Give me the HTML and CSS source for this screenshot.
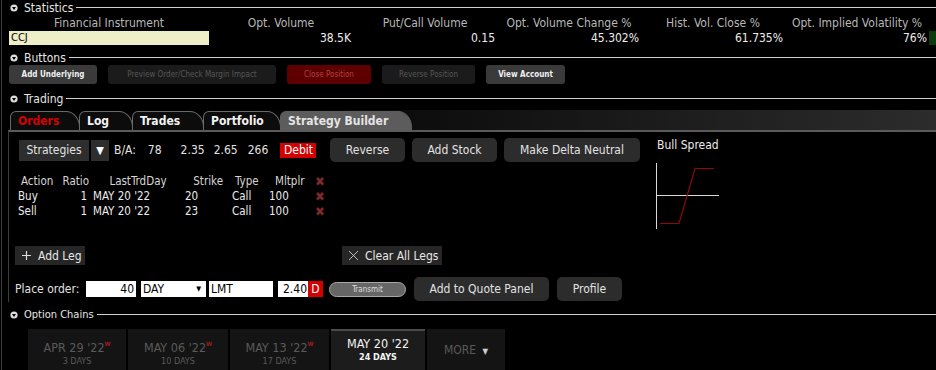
FILE: index.html
```html
<!DOCTYPE html>
<html lang="en">

<head>
	<meta charset="utf-8">
	<title>Option Trader</title>
	<link rel="stylesheet" href="styles.css">
</head>

<body>
	<div class="app">

		<h2 class="sec-head"><svg viewBox="0 0 8 8"><circle cx="4" cy="4" r="3.6" fill="#ddd"/><path d="M2 3h4l-2 3z" fill="#000"/></svg>Statistics</h2>
		<div class="stats">
			<div class="st-label">Financial Instrument</div>
			<div class="st-label">Opt. Volume</div>
			<div class="st-label">Put/Call Volume</div>
			<div class="st-label">Opt. Volume Change %</div>
			<div class="st-label">Hist. Vol. Close %</div>
			<div class="st-label">Opt. Implied Volatility %</div>
			<div></div>

			<div class="st-symbol">CCJ</div>
			<div class="st-value">38.5K</div>
			<div class="st-value">0.15</div>
			<div class="st-value">45.302%</div>
			<div class="st-value">61.735%</div>
			<div class="st-value">76%</div>
			<div class="st-flag"></div>
		</div>

		<h2 class="sec-head"><svg viewBox="0 0 8 8"><circle cx="4" cy="4" r="3.6" fill="#ddd"/><path d="M2 3h4l-2 3z" fill="#000"/></svg>Buttons</h2>
		<div class="btn-row">
			<button class="sbtn on w-underlying">Add Underlying</button>
			<button class="sbtn off w-preview">Preview Order/Check Margin Impact</button>
			<button class="sbtn danger w-close">Close Position</button>
			<button class="sbtn off w-reverse">Reverse Position</button>
			<button class="sbtn on w-account">View Account</button>
		</div>

		<h2 class="sec-head trading-head"><svg viewBox="0 0 8 8"><circle cx="4" cy="4" r="3.6" fill="#ddd"/><path d="M2 3h4l-2 3z" fill="#000"/></svg>Trading</h2>
		<div class="tabbar">
			<div class="tab red w-orders">Orders</div>
			<div class="tab w-log">Log</div>
			<div class="tab w-trades">Trades</div>
			<div class="tab w-portfolio">Portfolio</div>
			<div class="tab active w-builder">Strategy Builder</div>
		</div>

		<div class="trade-panel">
			<div class="builder">
				<div class="strat-row">
					<div class="strat-pick">Strategies</div>
					<div class="strat-drop">&#9660;</div>
					<div class="ba">
						<span class="ba-label">B/A:</span>
						<span class="ba-n1">78</span>
						<span class="ba-n2">2.35</span>
						<span class="ba-n3">2.65</span>
						<span class="ba-n4">266</span>
					</div>
					<span class="debit">Debit</span>
					<button class="gbtn w-rev">Reverse</button>
					<button class="gbtn w-stock">Add Stock</button>
					<button class="gbtn w-delta">Make Delta Neutral</button>
				</div>

				<div class="legs">
					<div class="lh c-act">Action</div>
					<div class="lh c-ratio">Ratio</div>
					<div class="lh c-day">LastTrdDay</div>
					<div class="lh c-strike">Strike</div>
					<div class="lh c-type">Type</div>
					<div class="lh c-mult">Mltplr</div>
					<div class="lx">&#10006;</div>

					<div class="ld c-act">Buy</div>
					<div class="ld c-ratio">1</div>
					<div class="ld c-day">MAY 20 '22</div>
					<div class="ld c-strike">20</div>
					<div class="ld c-type">Call</div>
					<div class="ld c-mult">100</div>
					<div class="lx">&#10006;</div>

					<div class="ld c-act">Sell</div>
					<div class="ld c-ratio">1</div>
					<div class="ld c-day">MAY 20 '22</div>
					<div class="ld c-strike">23</div>
					<div class="ld c-type">Call</div>
					<div class="ld c-mult">100</div>
					<div class="lx">&#10006;</div>
				</div>

				<div class="leg-actions">
					<div class="fbtn add-leg"><svg viewBox="0 0 10 10"><path d="M5 0v10M0 5h10" stroke="#ddd" stroke-width="1.3"/></svg>Add Leg</div>
					<div class="fbtn clear-legs"><svg viewBox="0 0 10 10"><path d="M0 0l10 10M10 0L0 10" stroke="#ccc" stroke-width="1"/></svg>Clear All Legs</div>
				</div>

				<div class="order-row">
					<span class="order-label">Place order:</span>
					<div class="fld qty">40</div>
					<div class="fld tif">DAY<span class="caret">&#9660;</span></div>
					<div class="fld otype">LMT</div>
					<div class="price"><span class="fld lmt">2.40</span><span class="dflag">D</span></div>
					<div class="transmit">Transmit</div>
					<button class="gbtn w-quote">Add to Quote Panel</button>
					<button class="gbtn w-profile">Profile</button>
				</div>
			</div>

			<div class="payoff">
				<div class="payoff-title">Bull Spread</div>
				<svg class="payoff-chart" viewBox="0 0 72 70" width="72" height="70">
					<path d="M5.5 2v66M5 34.5h63" stroke="#d8d8d8" stroke-width="1" fill="none"/>
					<path d="M9 62.5h19l16-55h19" stroke="#8e0b0b" stroke-width="1.2" fill="none"/>
				</svg>
			</div>
		</div>

		<h2 class="sec-head chains-head"><svg viewBox="0 0 8 8"><circle cx="4" cy="4" r="3.6" fill="#ddd"/><path d="M2 3h4l-2 3z" fill="#000"/></svg>Option Chains</h2>
		<div class="expiries">
			<div class="exp w-apr"><div class="exp-date">APR 29 '22<sup>W</sup></div><div class="exp-days">3 DAYS</div></div>
			<div class="exp w-may06"><div class="exp-date">MAY 06 '22<sup>W</sup></div><div class="exp-days">10 DAYS</div></div>
			<div class="exp w-may13"><div class="exp-date">MAY 13 '22<sup>W</sup></div><div class="exp-days">17 DAYS</div></div>
			<div class="exp current w-may20"><div class="exp-date">MAY 20 '22</div><div class="exp-days">24 DAYS</div></div>
			<div class="exp more w-more">MORE <span class="more-caret">&#9660;</span></div>
		</div>

	</div>
</body>

</html>
```

FILE: styles.css
```css
body {
	background-color: #000;
	color: #e2e2e2;
	font-family: "DejaVu Sans Condensed", "DejaVu Sans", sans-serif;
	font-stretch: condensed;
	font-size: 12px;
	margin: 0;
	overflow: hidden;
}

button {
	font-family: inherit;
	font-stretch: condensed;
	border: none;
	padding: 0;
	cursor: pointer;
}

.app {
	border-left: 1px solid #3c3c3c;
	margin-left: 1px;
	height: 370px;
	width: 935px;
}

/* section headers with a rule */
.sec-head {
	display: flex;
	align-items: center;
	height: 15px;
	margin: 0;
	padding-left: 8px;
	font-size: 12px;
	font-weight: normal;
	color: #e6e6e6;
}
.sec-head svg {
	width: 8px;
	height: 8px;
	margin-right: 6px;
}
.sec-head::after {
	content: "";
	flex: 1;
	border-top: 1px solid #d0d0d0;
	margin-left: 3px;
}

/* statistics */
.stats {
	display: grid;
	grid-template-columns: 200px repeat(5, 144px) 8px;
	grid-template-rows: 16px 14px;
	margin-left: 7px;
}
.st-label {
	color: #b8b8b8;
	text-align: center;
	line-height: 16px;
	font-size: 12px;
}
.st-symbol {
	background-color: #eeeec9;
	color: #000;
	line-height: 14px;
	padding-left: 2px;
	font-size: 11px;
}
.st-value {
	text-align: right;
	color: #ededed;
	line-height: 14px;
	padding-right: 2px;
	font-size: 12px;
}
.st-flag {
	background-color: #0b3a0b;
}
.stats + .sec-head {
	margin-top: 5px;
}

/* quick buttons */
.btn-row {
	display: flex;
	gap: 11px;
	margin-left: 7px;
}
.sbtn {
	height: 19px;
	border-radius: 3px;
	font-size: 8px;
}
.sbtn.on {
	background-color: #3a3a3a;
	color: #f0f0f0;
	font-weight: bold;
}
.sbtn.off {
	background-color: #1b1b1b;
	color: #575757;
}
.sbtn.danger {
	background-color: #5e0000;
	color: #b04040;
}
.w-underlying { width: 88px; }
.w-preview { width: 168px; }
.w-close { width: 84px; }
.w-reverse { width: 93px; }
.w-account { width: 79px; }

.trading-head {
	margin-top: 7px;
}

/* tabs */
.tabbar {
	display: flex;
	height: 20px;
	margin-top: 4px;
	padding-left: 8px;
	background: linear-gradient(to right, #000 20%, #2c2c2c);
	align-items: flex-end;
}
.tab {
	height: 18px;
	line-height: 19px;
	margin-right: -1px;
	padding-left: 7px;
	border: 1px solid #6a6a6a;
	border-bottom: none;
	border-radius: 6px 14px 0 0 / 6px 16px 0 0;
	background-color: #0c0c0c;
	color: #f2f2f2;
	font-weight: bold;
	font-size: 12px;
	box-sizing: content-box;
}
.tab.red {
	color: #d70000;
}
.tab.active {
	background-color: #5c5c5c;
	border-color: #5c5c5c;
	color: #e4e4e4;
}
.w-orders { width: 61px; }
.w-log { width: 45px; }
.w-trades { width: 63px; }
.w-portfolio { width: 69px; }
.w-builder { width: 123px; }

/* trading panel */
.trade-panel {
	display: flex;
	margin-left: 6px;
	height: 170px;
	border-top: 2px solid #5a5a5a;
	border-left: 1px solid #3c3c3c;
}
.builder {
	width: 640px;
	padding-left: 8px;
}

.strat-row {
	display: flex;
	align-items: center;
	margin-top: 6px;
	height: 24px;
}
.strat-pick {
	background-color: #2e2e2e;
	width: 70px;
	height: 21px;
	line-height: 21px;
	text-align: center;
	margin-left: 2px;
}
.strat-drop {
	background-color: #2e2e2e;
	width: 18px;
	height: 21px;
	line-height: 21px;
	text-align: center;
	margin-left: 2px;
	font-size: 11px;
	color: #fff;
}
.ba {
	display: flex;
	margin-left: 5px;
	width: 166px;
}
.ba-n1 { margin-left: 12px; }
.ba-n2 { margin-left: 19px; }
.ba-n3 { margin-left: 9px; }
.ba-n4 { margin-left: 10px; }
.debit {
	background-color: #d40000;
	color: #fff;
	padding: 0 4px;
	height: 15px;
	line-height: 15px;
	width: 28px;
}
.gbtn {
	background-color: #2c2c2c;
	color: #e2e2e2;
	border-radius: 5px;
	height: 24px;
	font-size: 12px;
}
.w-rev { width: 75px; margin-left: 14px; }
.w-stock { width: 85px; margin-left: 7px; }
.w-delta { width: 136px; margin-left: 7px; }

/* legs */
.legs {
	display: grid;
	grid-template-columns: 40px 34px 90px 46px 38px 46px 16px;
	grid-auto-rows: 15px;
	margin: 12px 0 0 2px;
	font-size: 11.5px;
	line-height: 15px;
}
.lh {
	color: #d6d6d6;
}
.ld {
	color: #ececec;
}
.lh.c-act { padding-left: 2px; }
.ld.c-act { margin-left: -1px; }
.lh.c-ratio { text-align: right; padding-right: 4px; }
.ld.c-ratio { text-align: right; padding-right: 6px; }
.lh.c-day { text-align: center; }
.lh.c-strike { text-align: right; padding-right: 6px; }
.ld.c-strike { padding-left: 2px; }
.lh.c-type { padding-left: 6px; }
.ld.c-type { padding-left: 3px; }
.lh.c-mult { padding-left: 8px; }
.ld.c-mult { padding-left: 2px; }
.lx {
	color: #7c2a2a;
	font-size: 13px;
	text-align: center;
	font-weight: bold;
	margin-left: -2px;
}

.leg-actions {
	display: flex;
	margin-top: 27px;
}
.fbtn {
	display: flex;
	align-items: center;
	background-color: #262626;
	height: 19px;
	color: #e6e6e6;
	font-size: 12px;
}
.fbtn svg {
	width: 9px;
	height: 9px;
	margin-right: 7px;
}
.add-leg {
	width: 70px;
	padding-left: 7px;
	box-sizing: border-box;
	margin-left: -2px;
}
.clear-legs {
	width: 100px;
	padding-left: 7px;
	box-sizing: border-box;
	margin-left: 257px;
}

.order-row {
	display: flex;
	align-items: center;
	margin-top: 12px;
	height: 24px;
	margin-left: -2px;
}
.order-label {
	width: 71px;
}
.fld {
	background-color: #fff;
	color: #000;
	height: 16px;
	line-height: 16px;
	box-sizing: border-box;
	font-size: 12px;
}
.qty {
	width: 50px;
	text-align: right;
	padding-right: 2px;
}
.tif {
	width: 65px;
	margin-left: 5px;
	padding-left: 2px;
	position: relative;
}
.caret {
	position: absolute;
	right: 5px;
	top: 0;
	font-size: 7px;
}
.otype {
	width: 64px;
	margin-left: 3px;
	padding-left: 2px;
}
.price {
	display: flex;
	margin-left: 5px;
}
.lmt {
	width: 30px;
	text-align: right;
	padding-right: 1px;
}
.dflag {
	background-color: #d40000;
	color: #fff;
	width: 15px;
	height: 16px;
	line-height: 16px;
	text-align: center;
}
.transmit {
	width: 77px;
	height: 15px;
	margin-left: 6px;
	box-sizing: border-box;
	border: 1px solid #a8a8a8;
	border-radius: 8px;
	background-color: #666;
	color: #ddd;
	font-size: 8px;
	line-height: 13px;
	text-align: center;
}
.w-quote { width: 135px; margin-left: 8px; }
.w-profile { width: 65px; margin-left: 8px; }

/* payoff diagram */
.payoff-title {
	margin-top: 6px;
	height: 14px;
	line-height: 14px;
	color: #ececec;
}
.payoff-chart {
	display: block;
	margin-top: 9px;
	margin-left: -6px;
}

.chains-head {
	margin-top: 5px;
	font-size: 11px;
}

/* expiry tabs */
.expiries {
	display: flex;
	gap: 2px;
	margin: 7px 0 0 26px;
}
.exp {
	height: 42px;
	background-color: #141414;
	color: #5a5a5a;
	text-align: center;
	box-sizing: border-box;
	padding-top: 8px;
}
.exp-date {
	font-size: 12.5px;
	line-height: 14px;
}
.exp-date sup {
	color: #a01c1c;
	font-size: 6px;
	font-weight: bold;
	vertical-align: 6px;
}
.exp-days {
	font-size: 9px;
	line-height: 12px;
}
.exp.current {
	background-color: #1c1c1c;
	border-top: 2px solid #4a4a4a;
	padding-top: 6px;
	color: #f4f4f4;
}
.exp.current .exp-days {
	font-weight: bold;
}
.exp.more {
	padding-top: 14px;
	font-size: 12px;
}
.more-caret {
	color: #d0d0d0;
	font-size: 8px;
	margin-left: 3px;
}
.w-apr { width: 98px; }
.w-may06 { width: 100px; }
.w-may13 { width: 99px; }
.w-may20 { width: 94px; }
.w-more { width: 78px; }
```
